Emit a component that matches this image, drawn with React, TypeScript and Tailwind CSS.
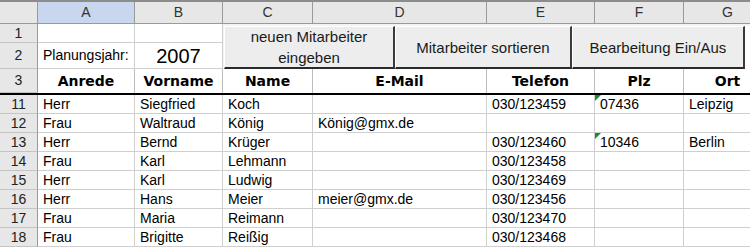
const cols = [
  { key: "A", w: "w-[97px]" },
  { key: "B", w: "w-[88px]" },
  { key: "C", w: "w-[90px]" },
  { key: "D", w: "w-[174px]" },
  { key: "E", w: "w-[108px]" },
  { key: "F", w: "w-[89px]" },
  { key: "G", w: "w-[88px]" },
]

const rows = [
  { n: 11, cells: ["Herr", "Siegfried", "Koch", "", "030/123459", "07436", "Leipzig"] },
  { n: 12, cells: ["Frau", "Waltraud", "König", "König@gmx.de", "", "", ""] },
  { n: 13, cells: ["Herr", "Bernd", "Krüger", "", "030/123460", "10346", "Berlin"] },
  { n: 14, cells: ["Frau", "Karl", "Lehmann", "", "030/123458", "", ""] },
  { n: 15, cells: ["Herr", "Karl", "Ludwig", "", "030/123469", "", ""] },
  { n: 16, cells: ["Herr", "Hans", "Meier", "meier@gmx.de", "030/123456", "", ""] },
  { n: 17, cells: ["Frau", "Maria", "Reimann", "", "030/123470", "", ""] },
  { n: 18, cells: ["Frau", "Brigitte", "Reißig", "", "030/123468", "", ""] },
]

const headers = ["Anrede", "Vorname", "Name", "E-Mail", "Telefon", "Plz", "Ort"]

const RowHead = ({ children, h }: { children?: React.ReactNode; h: string }) => (
  <div className={`w-[38px] ${h} shrink-0 bg-[#e7e7e7] border-r border-r-[#9a9a9a] border-b border-b-[#c4c4c4] flex items-center justify-center text-[14px] text-[#222]`}>
    {children}
  </div>
)

const XlButton = ({ w, children }: { w: string; children: React.ReactNode }) => (
  <div className={`${w} h-full shrink-0 bg-[#ededed] border-t border-l border-t-white border-l-white border-r-2 border-b-2 border-r-[#3a3a3a] border-b-[#2a2a2a] flex items-center justify-center text-center text-[15px] leading-[21px] text-[#1a1a1a]`}>
    {children}
  </div>
)

export default function App() {
  return (
    <div className="w-[750px] h-[251px] overflow-hidden bg-white font-['Liberation_Sans',Arial,sans-serif] text-black">
      <div className="w-[772px]">
        <div className="h-[2px] bg-[#8c8c8c]" />
        {/* column letters */}
        <div className="flex h-[22px]">
          <div className="w-[38px] shrink-0 bg-[#e7e7e7] border-r border-b border-[#9a9a9a]" />
          {cols.map((c) => (
            <div
              key={c.key}
              className={`${c.w} shrink-0 border-r border-b border-[#9a9a9a] flex items-center justify-center text-[14px] text-[#333] ${c.key === "A" ? "bg-[#c9d7ee]" : "bg-[#e7e7e7]"}`}
            >
              {c.key}
            </div>
          ))}
        </div>

        {/* rows 1 + 2 with buttons */}
        <div className="flex h-[45px]">
          <div className="flex flex-col">
            <RowHead h="h-[19px]">1</RowHead>
            <RowHead h="h-[26px]">2</RowHead>
          </div>
          <div className="flex flex-col">
            <div className="w-[97px] h-[19px] border-r border-b border-[#cfcfcf]" />
            <div className="w-[97px] h-[26px] border-r border-b border-[#cfcfcf] flex items-center pl-[5px] text-[14px] whitespace-nowrap">
              Planungsjahr:
            </div>
          </div>
          <div className="flex flex-col">
            <div className="w-[88px] h-[19px] border-r border-b border-[#cfcfcf]" />
            <div className="w-[88px] h-[26px] border-r border-b border-[#cfcfcf] flex items-center justify-center text-[20px] leading-none pt-[1px]">
              2007
            </div>
          </div>
          <div className="flex-1 flex pt-[2px] pl-[1px] bg-[#f4f4f4]">
            <XlButton w="w-[171px]">
              <span>neuen Mitarbeiter<br />eingeben</span>
            </XlButton>
            <XlButton w="w-[177px]">Mitarbeiter sortieren</XlButton>
            <XlButton w="w-[173px]">Bearbeitung Ein/Aus</XlButton>
            <div className="flex-1 bg-white" />
          </div>
        </div>

        {/* header row 3 */}
        <div className="flex h-[26px] border-b-2 border-b-black">
          <RowHead h="h-[24px]">3</RowHead>
          {cols.map((c, i) => (
            <div
              key={c.key}
              className={`${c.w} shrink-0 h-[24px] border-r border-[#bdbdbd] flex items-center justify-center font-['DejaVu_Sans',sans-serif] font-bold text-[14px]`}
            >
              {headers[i]}
            </div>
          ))}
        </div>

        {/* data rows */}
        {rows.map((r) => (
          <div key={r.n} className="flex h-[19px]">
            <RowHead h="h-[19px]">{r.n}</RowHead>
            {cols.map((c, i) => (
              <div
                key={c.key}
                className={`${c.w} relative shrink-0 h-[19px] border-r border-b border-[#cfcfcf] flex items-center pl-[5px] text-[14px] whitespace-nowrap overflow-hidden`}
              >
                {c.key === "F" && r.cells[i] && (
                  <span className="absolute left-0 top-0 w-0 h-0 border-t-[6px] border-t-[#1f8a2e] border-r-[6px] border-r-transparent" />
                )}
                {r.cells[i]}
              </div>
            ))}
          </div>
        ))}
      </div>
    </div>
  )
}
